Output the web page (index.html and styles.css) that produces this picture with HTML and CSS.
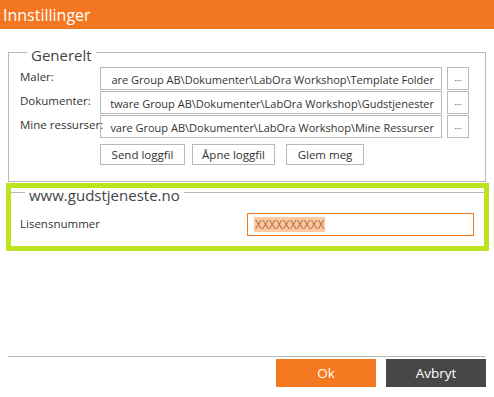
FILE: index.html
```html
<!DOCTYPE html>
<html>
<head>
<meta charset="utf-8">
<link rel="stylesheet" href="styles.css">
</head>
<body>
<div class="window">
  <div class="titlebar">Innstillinger</div>
  <div class="content">
    <fieldset class="group general">
      <legend>Generelt</legend>
      <div class="row">
        <div class="label">Maler:</div>
        <div class="path"><span>are Group AB\Dokumenter\LabOra Workshop\Template Folder</span></div>
        <div class="browse">...</div>
      </div>
      <div class="row">
        <div class="label">Dokumenter:</div>
        <div class="path"><span>tware Group AB\Dokumenter\LabOra Workshop\Gudstjenester</span></div>
        <div class="browse">...</div>
      </div>
      <div class="row">
        <div class="label">Mine ressurser:</div>
        <div class="path"><span>vare Group AB\Dokumenter\LabOra Workshop\Mine Ressurser</span></div>
        <div class="browse">...</div>
      </div>
      <div class="actions">
        <div class="btn btn-send">Send loggfil</div>
        <div class="btn btn-open">Åpne loggfil</div>
        <div class="btn btn-forget">Glem meg</div>
      </div>
    </fieldset>
    <div class="highlight">
      <fieldset class="group license">
        <legend>www.gudstjeneste.no</legend>
        <div class="license-row">
          <div class="label">Lisensnummer</div>
          <div class="license-input"><span class="selected">XXXXXXXXXX</span></div>
        </div>
      </fieldset>
    </div>
    <div class="separator"></div>
    <div class="footer">
      <div class="fbtn ok">Ok</div>
      <div class="fbtn cancel">Avbryt</div>
    </div>
  </div>
</div>
</body>
</html>
```

FILE: styles.css
```css
html, body {
  margin: 0;
  padding: 0;
  background: #ffffff;
}
body {
  font-family: "Open Sans", "Noto Sans", sans-serif;
  color: #333333;
}
.window {
  width: 494px;
  height: 397px;
  overflow: hidden;
}
.titlebar {
  height: 29px;
  background: #f37721;
  color: #ffffff;
  font-size: 16px;
  line-height: 31px;
  padding-left: 3px;
  box-sizing: border-box;
}
.content {
  padding: 0 8px;
}
.group {
  margin: 0;
  min-width: 0;
}
.group legend {
  font-size: 15px;
  line-height: 20px;
  padding: 5px 4px 0 4px;
  margin-left: 7px;
  color: #444444;
}
.general {
  margin-top: 11px;
  border: 1px solid #b9b9b9;
  padding: 2px 0 16px 11px;
}
.row {
  display: flex;
  align-items: flex-start;
  height: 23px;
  margin-top: 1px;
}
.row:first-of-type {
  margin-top: 0;
}
.label {
  font-size: 11.5px;
  line-height: 14px;
  padding-top: 3px;
  white-space: nowrap;
  color: #333333;
}
.row .label {
  width: 80px;
  flex: none;
}
.path {
  width: 342px;
  height: 23px;
  box-sizing: border-box;
  border: 1px solid #b9b9b9;
  display: flex;
  justify-content: flex-end;
  align-items: center;
  overflow: hidden;
  white-space: nowrap;
  font-size: 11px;
  padding: 2px 7px 0 0;
  color: #333333;
}
.path span {
  flex: none;
}
.browse {
  width: 22px;
  height: 23px;
  box-sizing: border-box;
  margin-left: 5px;
  border: 1px solid #b9b9b9;
  font-size: 9px;
  text-align: center;
  line-height: 20px;
  color: #333333;
}
.actions {
  display: flex;
  margin: 6px 0 0 80px;
}
.btn {
  height: 21px;
  box-sizing: border-box;
  border: 1px solid #b9b9b9;
  font-size: 11.5px;
  line-height: 19px;
  text-align: center;
  color: #333333;
}
.btn-send { width: 85px; }
.btn-open { width: 83px; margin-left: 7px; }
.btn-forget { width: 78px; margin-left: 11px; }

.highlight {
  margin: 1px -3px 0 -2px;
  height: 68px;
  box-sizing: border-box;
  border: 5px solid #bbe31e;
}
.license {
  border: none;
  border-top: 1px solid #b9b9b9;
  padding: 0 0 0 9px;
  margin-top: -8px;
}
.license legend {
  margin-left: 5px;
}
.license-row {
  display: flex;
  align-items: flex-start;
  margin-top: 8px;
}
.license-row .label {
  flex: 1;
  padding-top: 4px;
}
.license-input {
  width: 227px;
  height: 23px;
  box-sizing: border-box;
  margin-right: 10px;
  border: 1px solid #f47920;
  padding: 3px 0 0 6px;
  display: flex;
  align-items: flex-start;
}
.selected {
  background: #fcc9a2;
  color: #b46b3c;
  font-size: 12px;
  line-height: 15px;
  padding: 0 1px;
}
.separator {
  margin-top: 105px;
  height: 1px;
  background: #b9b9b9;
}
.footer {
  display: flex;
  justify-content: flex-end;
  gap: 10px;
  margin-top: 2px;
}
.fbtn {
  width: 100px;
  height: 28px;
  color: #ffffff;
  font-size: 13.5px;
  line-height: 28px;
  text-align: center;
}
.ok { background: #f47920; }
.cancel { background: #474747; }
```
